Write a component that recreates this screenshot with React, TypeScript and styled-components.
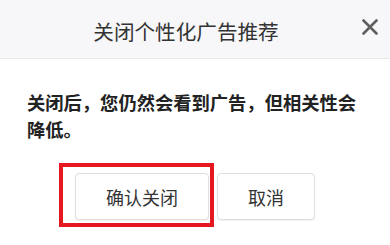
import styled, { createGlobalStyle } from 'styled-components'

const GlobalStyle = createGlobalStyle`
  html, body {
    margin: 0;
    padding: 0;
    background: #ffffff;
    font-family: "Noto Sans CJK SC", "Noto Sans", sans-serif;
  }
`

// 关闭图标
const CloseIcon = () => (
  <svg width="16" height="16" viewBox="0 0 16 16" fill="none">
    <path d="M1.5 1.5 L14.5 14.5 M14.5 1.5 L1.5 14.5" stroke="#5f5f5f" strokeWidth="2.6" strokeLinecap="round" />
  </svg>
)

const App = () => {
  return (
    <>
      <GlobalStyle />
      <Dialog>
        <Header>
          <Title>关闭个性化广告推荐</Title>
          <CloseButton aria-label="关闭">
            <CloseIcon />
          </CloseButton>
        </Header>

        <Body>
          <Message>关闭后，您仍然会看到广告，但相关性会降低。</Message>

          <Actions>
            <Button $highlight>确认关闭</Button>
            <Button>取消</Button>
          </Actions>
        </Body>
      </Dialog>
    </>
  )
}

const Dialog = styled.div`
  width: 390px;
  height: 245px;
  background: #ffffff;
  overflow: hidden;
`

const Header = styled.div`
  position: relative;
  height: 58px;
  display: flex;
  align-items: center;
  background: #f7f7f9;
  border-bottom: 1px solid #e9e9ec;
`

const Title = styled.h2`
  flex: 1;
  margin: 0;
  padding: 4px 18px 0 0;
  text-align: center;
  font-size: 20.6px;
  font-weight: 400;
  color: #333333;
`

const CloseButton = styled.button`
  position: absolute;
  top: 19px;
  right: 12px;
  width: 16px;
  height: 16px;
  padding: 0;
  border: none;
  background: none;
  display: flex;
`

const Body = styled.div`
  padding: 30px 20px 0 27px;
`

const Message = styled.p`
  margin: 0;
  font-size: 18.3px;
  line-height: 27px;
  font-weight: 700;
  color: #222222;
`

const Actions = styled.div`
  display: flex;
  justify-content: center;
  gap: 8px;
  margin: 30px 0 0 -7px;
`

const Button = styled.button<{ $highlight?: boolean }>`
  position: relative;
  height: 47px;
  padding: 0 30px;
  border: 1px solid #dedee2;
  border-radius: 4px;
  background: #ffffff;
  box-shadow: 0 1px 1px rgba(0, 0, 0, 0.06);
  font-family: inherit;
  font-size: 18px;
  color: #333333;

  ${({ $highlight }) =>
    $highlight &&
    `
    &::after {
      content: '';
      position: absolute;
      left: -17px;
      top: -11px;
      right: -6px;
      bottom: -8px;
      border: 4px solid #e5171f;
      pointer-events: none;
    }
  `}
`

export default App
